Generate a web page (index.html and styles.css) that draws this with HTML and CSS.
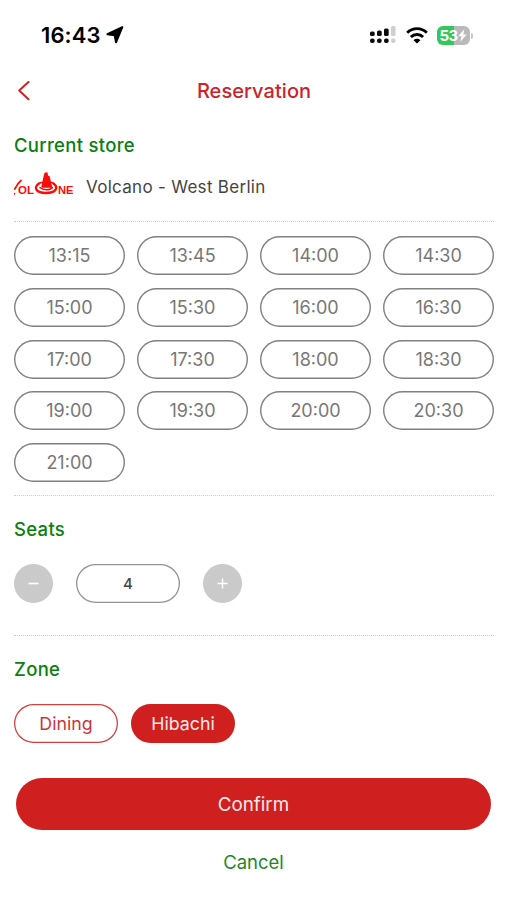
FILE: index.html
```html
<!DOCTYPE html>
<html lang="en">
<head>
<meta charset="utf-8">
<meta name="viewport" content="width=device-width, initial-scale=1">
<title>Reservation</title>
<link rel="stylesheet" href="styles.css">
</head>
<body>
<div class="status">
  <span class="clock">16:43</span>
  <svg class="location" width="18" height="18" viewBox="0 0 18 18"><path d="M16.300 1.200 1.500 8.200l7.200 1.100 1.300 7z" fill="#000" stroke="#000" stroke-width="2" stroke-linejoin="round"/></svg>
  <div class="indicators">
    <svg width="26" height="18" viewBox="0 0 26 18">
      <g fill="#0c0c0c"><rect x="0" y="5.500" width="4.700" height="4.500" rx="1.500"/><rect x="7" y="4.500" width="4.700" height="5.500" rx="1.500"/><rect x="14" y="2.500" width="4.700" height="7.500" rx="1.500"/><rect x="0" y="12.500" width="4.700" height="4.500" rx="2"/><rect x="7" y="12.500" width="4.700" height="4.500" rx="2"/><rect x="14" y="12.500" width="4.700" height="4.500" rx="2"/></g>
      <g fill="#cfcfcf"><rect x="21" y="0" width="4.500" height="10" rx="1.500"/><rect x="21" y="12.500" width="4.500" height="4.500" rx="2"/></g>
    </svg>
    <svg class="wifi" width="22" height="17" viewBox="0 0 22 17" fill="none" stroke="#000" stroke-width="2.900"><path d="M1.200 5.700a13.800 13.800 0 0 1 19.600 0"/><path d="M4.900 10a8.600 8.600 0 0 1 12.200 0"/><path d="M11 16.600 7.600 13.200a4.800 4.800 0 0 1 6.800 0z" fill="#000" stroke="none"/></svg>
    <div class="battery"><span>53</span><svg width="9" height="13" viewBox="0 0 9 13"><path d="M6.300.3.2 7.300h3.300L2.300 12.700 8.800 5.500H5.300z" fill="#fff"/></svg></div>
  </div>
</div>
<header class="nav">
  <svg class="back" width="12" height="20" viewBox="0 0 12 20"><path d="M10.500.9 1.200 9.600l9.300 8.700" fill="none" stroke="#c9252c" stroke-width="2" stroke-linecap="round" stroke-linejoin="round"/></svg>
  <h1>Reservation</h1>
</header>
<main>
  <section class="store">
    <h2>Current store</h2>
    <div class="store-row">
      <svg class="logo" width="61" height="26" viewBox="0 0 61 26" fill="none" stroke="#fb0c08" stroke-linecap="round" stroke-linejoin="round">
        <path d="M7 9.500Q4 12 .8 18M.5 22.500v.3" stroke-width="1.700"/>
        <text x="4" y="22.500" textLength="16" lengthAdjust="spacingAndGlyphs" class="logo-text">OL</text>
        <path d="M25 12.500c-6 4-3 9.500 7 9.500s13-5.500 7.500-9.500" stroke-width="2.300"/>
        <path d="M25 12.500c1.500-.8 3-1.200 5-1.200M35 11.300c2 0 3.500.5 4.500 1.200M26 16.500c3 3 10 3 12.500 0" stroke-width="1.600"/>
        <path d="m31 2.500-1 4-2 9.500h9.500L35 5.500h-1.500l-.5-3.500z" fill="#fb0c08" stroke-width="1.300"/>
        <text x="44" y="22.500" textLength="15.500" lengthAdjust="spacingAndGlyphs" class="logo-text">NE</text>
      </svg>
      <span>Volcano - West Berlin</span>
    </div>
  </section>
  <section class="times">
    <button>13:15</button><button>13:45</button><button>14:00</button><button>14:30</button>
    <button>15:00</button><button>15:30</button><button>16:00</button><button>16:30</button>
    <button>17:00</button><button>17:30</button><button>18:00</button><button>18:30</button>
    <button>19:00</button><button>19:30</button><button>20:00</button><button>20:30</button>
    <button>21:00</button>
  </section>
  <section class="seats">
    <h2>Seats</h2>
    <div class="stepper">
      <button class="step" aria-label="Fewer"><svg width="11" height="11" viewBox="0 0 11 11"><path d="M.5 5.500h10" stroke="#fff" stroke-width="1.700"/></svg></button>
      <div class="count">4</div>
      <button class="step" aria-label="More"><svg width="11" height="11" viewBox="0 0 11 11"><path d="M.5 5.500h10M5.500.5v10" stroke="#fff" stroke-width="1.500"/></svg></button>
    </div>
  </section>
  <section class="zone">
    <h2>Zone</h2>
    <div class="zones"><button>Dining</button><button class="selected">Hibachi</button></div>
  </section>
</main>
<footer>
  <button class="confirm">Confirm</button>
  <button class="cancel">Cancel</button>
</footer>
</body>
</html>
```
FILE: styles.css
```css
* { box-sizing: border-box; }
body {
  margin: 0;
  width: 507px;
  height: 900px;
  background: #fff;
  color: #444;
  font-family: Inter, "Liberation Sans", sans-serif;
  overflow: hidden;
}
button {
  margin: 0;
  padding: 0;
  border: 0;
  background: none;
  font: inherit;
  display: flex;
  align-items: center;
  justify-content: center;
}
svg { display: block; flex: none; }
h1, h2 { margin: 0; font-weight: 500; }
.status {
  height: 70px;
  padding: 0 37px 0 41px;
  display: flex;
  align-items: center;
}
.clock { font-size: 22px; font-weight: 600; color: #000; letter-spacing: 0.1px; }
.location { margin-left: 5px; }
.indicators { margin-left: auto; display: flex; align-items: center; }
.wifi { margin-left: 10px; }
.battery {
  position: relative;
  width: 33px;
  height: 19px;
  margin-left: 9px;
  border-radius: 6px;
  background: linear-gradient(90deg, #34c759 53%, #b9b9b9 53%);
  color: #fff;
  font-size: 15px;
  font-weight: 700;
  letter-spacing: -0.7px;
  display: flex;
  align-items: center;
  justify-content: center;
}
.battery svg { margin-left: 1px; }
.battery::after {
  content: "";
  position: absolute;
  right: -3px;
  top: 7px;
  width: 2px;
  height: 6px;
  border-radius: 0 2px 2px 0;
  background: #c5c5c5;
}
.nav {
  height: 42px;
  padding: 0 17px 0 18px;
  display: grid;
  grid-template-columns: 12px 1fr 12px;
  align-items: center;
}
h1 { font-size: 20px; color: #cb2329; text-align: center; letter-spacing: 0.05px; }
main { padding: 0 13px 0 14px; }
h2 { font-size: 18.5px; line-height: 24px; color: #0b800f; letter-spacing: 0.3px; }
section { border-bottom: 1px dotted #cfcfcf; }
.store { height: 110px; padding-top: 20.5px; }
.store-row {
  height: 26px;
  margin-top: 17px;
  display: flex;
  align-items: center;
  gap: 11px;
  font-size: 17px;
  letter-spacing: 0.3px;
}
.logo { margin-top: -6px; }
.logo-text { font: 700 11px "Liberation Sans", sans-serif; fill: #fb0c08; stroke: none; letter-spacing: 0; }
.times {
  height: 274px;
  padding-top: 14px;
  display: grid;
  grid-template-columns: repeat(4, 111px);
  grid-auto-rows: 39px;
  gap: 12.8px 12px;
  align-content: start;
}
.times button {
  box-shadow: inset 0 0 0 1.4px #808080;
  border-radius: 20px;
  color: #777;
  font-size: 18px;
}
.seats { height: 140px; padding-top: 21px; }
.stepper { display: flex; margin-top: 23px; }
.step { width: 39px; height: 39px; border-radius: 50%; background: #cacaca; }
.count {
  width: 104px;
  height: 39px;
  margin: 0 23px;
  box-shadow: inset 0 0 0 1.3px #939393;
  border-radius: 20px;
  color: #444;
  font-size: 15px;
  font-weight: 500;
  display: flex;
  align-items: center;
  justify-content: center;
}
.zone { border: 0; padding-top: 21px; height: 142px; }
.zones { display: flex; gap: 13px; margin-top: 23px; }
.zones button {
  width: 104px;
  height: 39px;
  box-shadow: inset 0 0 0 1.3px #d04040;
  border-radius: 20px;
  color: #c9363b;
  font-size: 17.8px;
}
.zones .selected { background: #d01f1f; box-shadow: none; color: #fbe9e9; }
footer {
  padding: 0 16px;
  display: flex;
  flex-direction: column;
  align-items: center;
}
.confirm {
  width: 475px;
  height: 52px;
  border-radius: 26px;
  background: #d01f1f;
  color: #fbe9e9;
  font-size: 18.8px;
}
.cancel { margin-top: 20px; height: 24px; color: #25852a; font-size: 18.5px; }
```
